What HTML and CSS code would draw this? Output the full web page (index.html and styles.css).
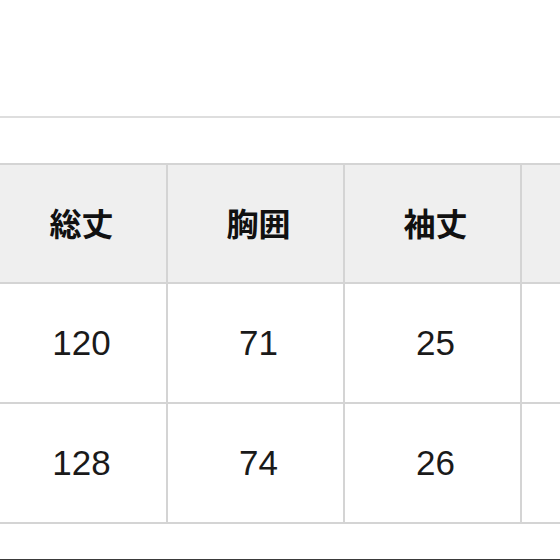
FILE: index.html
```html
<!DOCTYPE html>
<html lang="ja">
<head>
<meta charset="utf-8">
<link rel="stylesheet" href="styles.css">
</head>
<body>
<div class="page">
  <div class="top-space"></div>
  <div class="rule"></div>
  <div class="size-table">
    <div class="cell head">総丈</div>
    <div class="cell head">胸囲</div>
    <div class="cell head">袖丈</div>
    <div class="cell head"></div>
    <div class="cell">120</div>
    <div class="cell">71</div>
    <div class="cell">25</div>
    <div class="cell"></div>
    <div class="cell">128</div>
    <div class="cell">74</div>
    <div class="cell">26</div>
    <div class="cell"></div>
  </div>
  <div class="bottom-rule"></div>
</div>
</body>
</html>
```

FILE: styles.css
```css
html, body {
  margin: 0;
  padding: 0;
  overflow: hidden;
  background: #ffffff;
}
.page {
  width: 560px;
  height: 560px;
  overflow: hidden;
  font-family: "Liberation Sans", "Noto Sans CJK JP", sans-serif;
  color: #1a1a1a;
}
.top-space {
  height: 116px;
}
.rule {
  height: 2px;
  background: #dedede;
}
.size-table {
  margin-top: 45px;
  margin-left: -11px;
  display: grid;
  grid-template-columns: repeat(4, 175px);
  grid-auto-rows: 118px;
  grid-template-rows: 117px;
  gap: 2px;
  padding: 2px;
  background: #d4d4d4;
  width: max-content;
}
.cell {
  background: #ffffff;
  display: flex;
  align-items: center;
  justify-content: center;
  padding-left: 6px;
  font-size: 35px;
}
.cell.head {
  background: #efefef;
  font-family: "Noto Sans CJK JP", sans-serif;
  font-weight: 700;
  font-size: 32px;
  padding-bottom: 4px;
  color: #111;
}
.bottom-rule {
  margin-top: 35px;
  height: 1px;
  background: #3a3a3a;
}
```
